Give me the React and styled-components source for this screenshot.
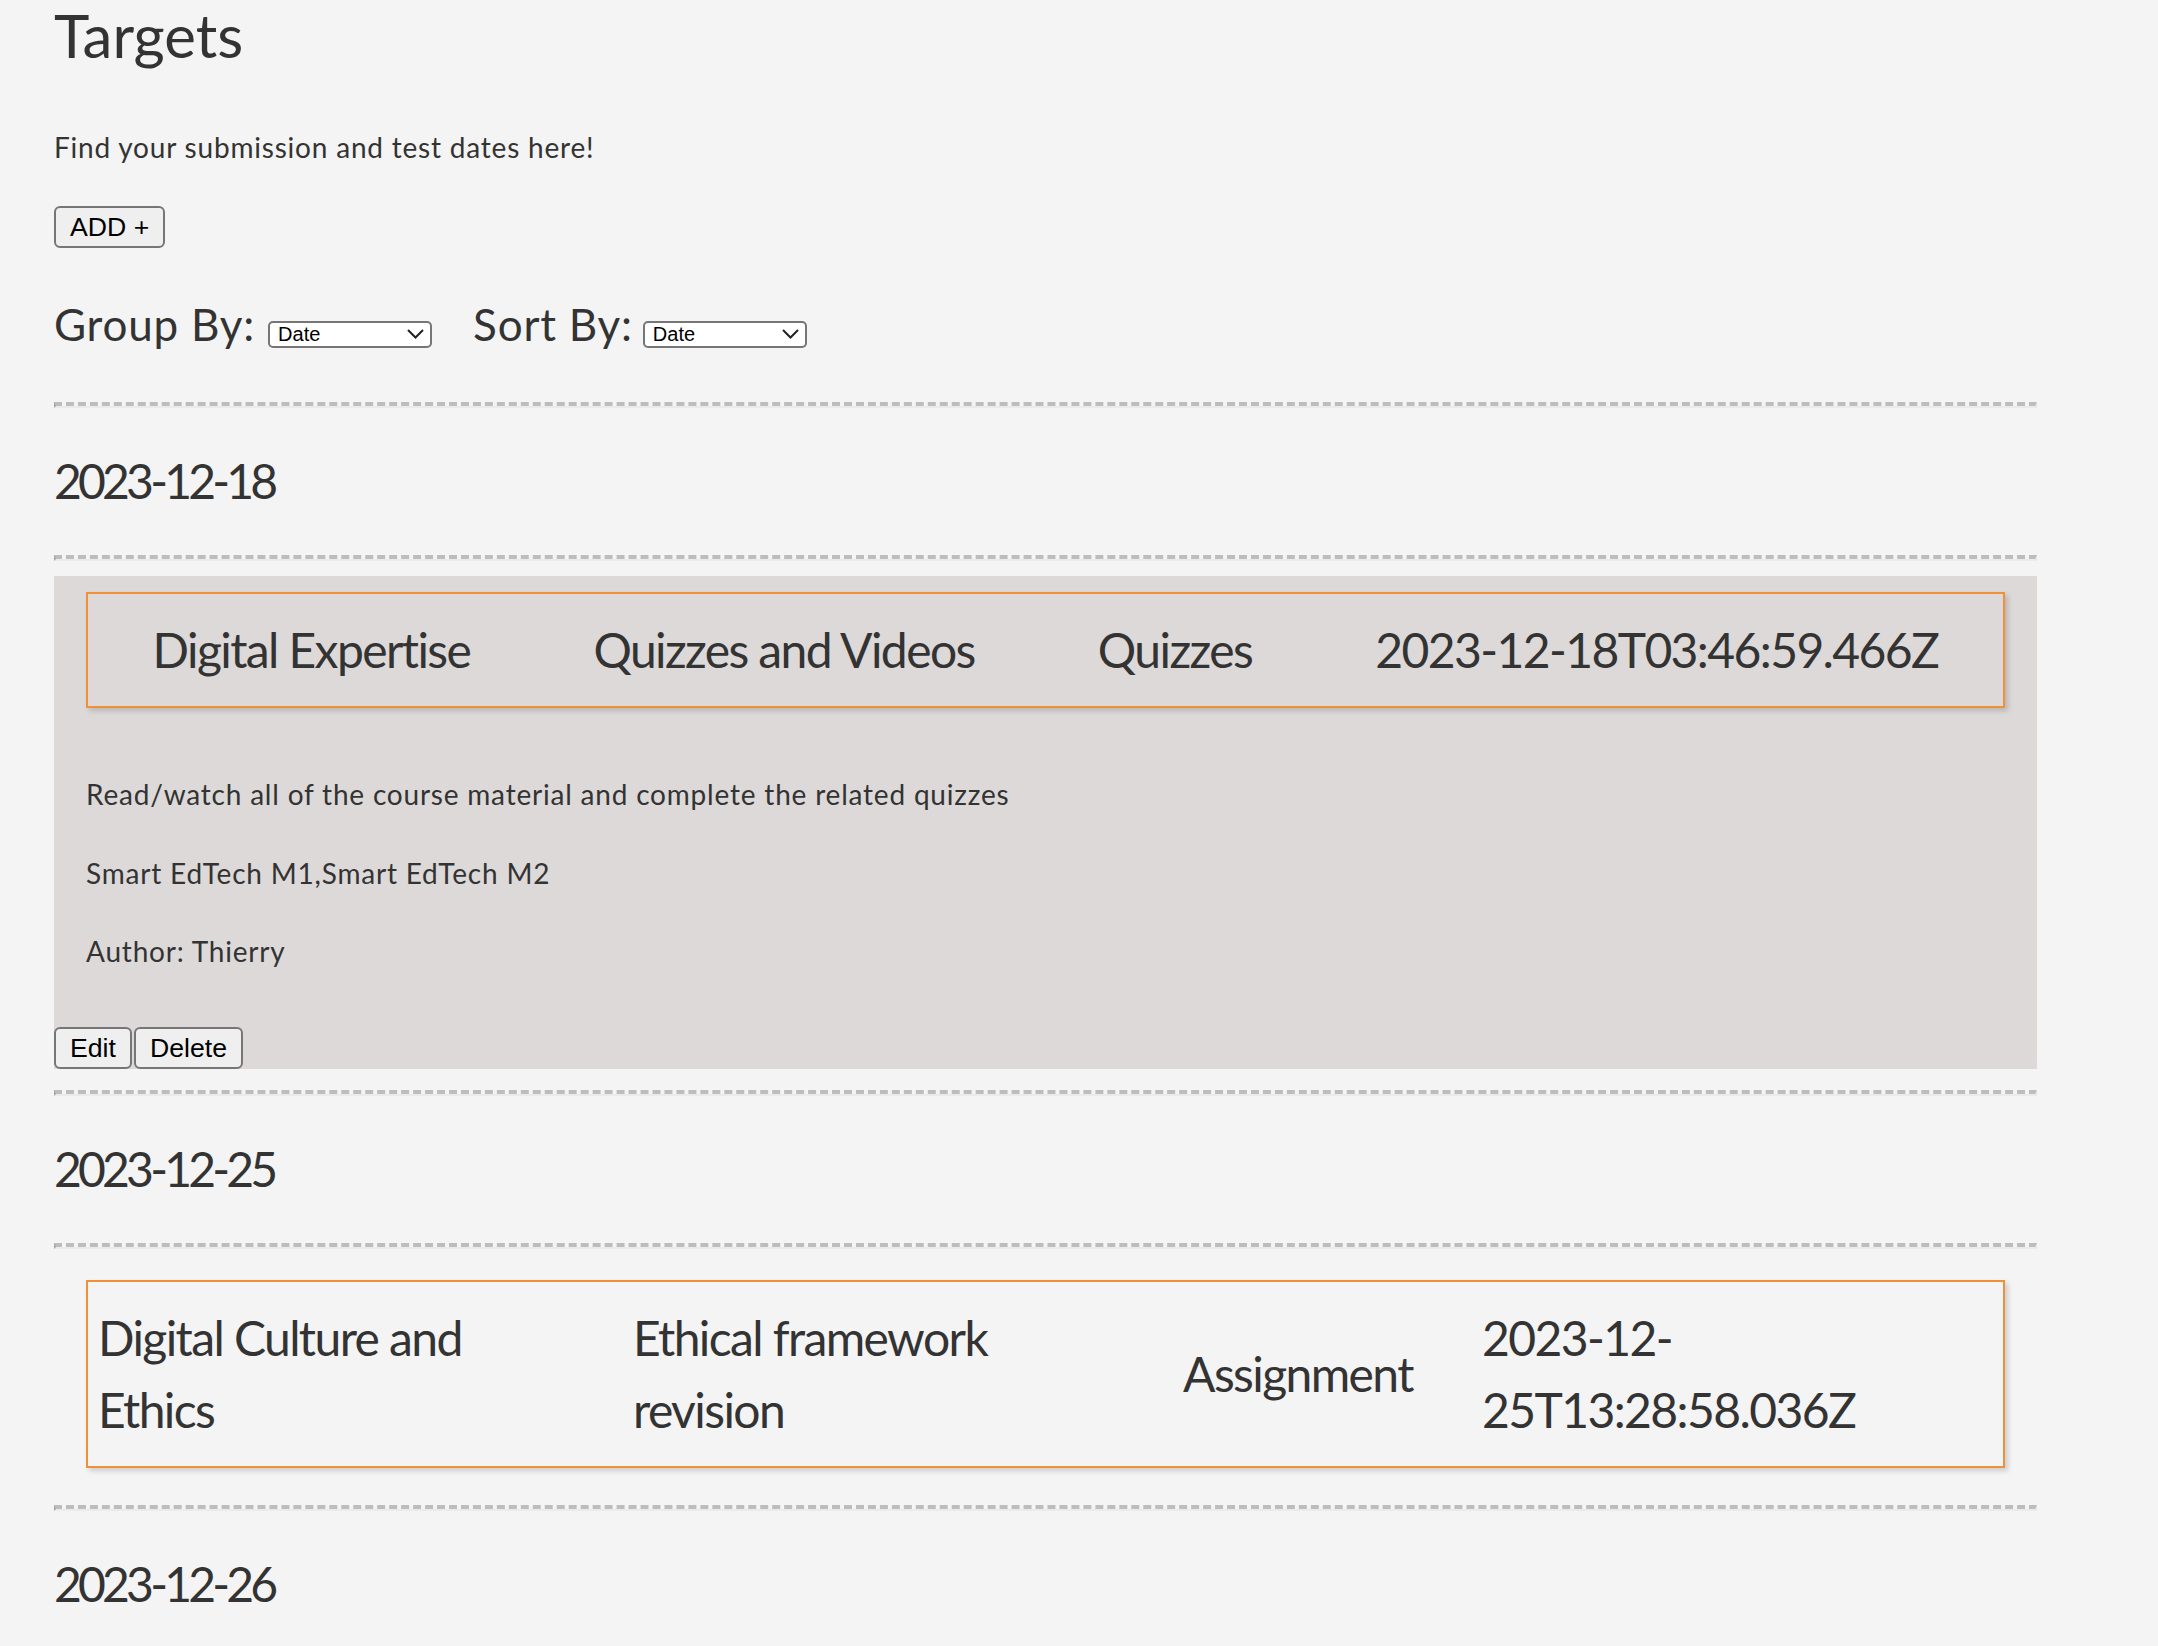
import React, { useState } from "react";
import styled, { createGlobalStyle } from "styled-components";

const GlobalStyle = createGlobalStyle`
  body {
    margin: 0;
    background: #f4f4f4;
    font-family: Lato, "Open Sans", sans-serif;
    color: #333;
  }
`;

const Pagina = styled.div`
  padding: 0 121px 40px 54px;
`;

const Titulo = styled.h1`
  font-size: 60px;
  font-weight: 400;
  line-height: 70px;
  margin: 0;
`;

const Intro = styled.p`
  font-size: 28px;
  line-height: 40px;
  letter-spacing: 0.8px;
  margin: 57px 0 0;
`;

const Boton = styled.button`
  height: 42px;
  padding: 0 14px;
  border: 2px solid #767676;
  border-radius: 6px;
  background: #efefef;
  color: #000;
  font-family: "Liberation Sans", Arial, sans-serif;
  font-size: 26.67px;
  cursor: pointer;
`;

const BotonAgregar = styled(Boton)`
  margin-top: 39px;
  display: block;
`;

const Controles = styled.div`
  display: flex;
  align-items: baseline;
  margin: 48px 0 50px;
`;

const Etiqueta = styled.label`
  font-size: 44px;
  line-height: 56px;
  letter-spacing: 0.8px;
  margin-left: ${(p) => p.$offset || 0}px;
`;

const SelectorCaja = styled.span`
  position: relative;
  display: inline-block;
  margin-left: ${(p) => p.$offset}px;
  svg {
    position: absolute;
    right: 8px;
    top: 8px;
    pointer-events: none;
  }
`;

const Selector = styled.select`
  appearance: none;
  width: 164px;
  height: 27px;
  padding: 0 0 0 8px;
  border: 2px solid #767676;
  border-radius: 5px;
  background: #fff;
  color: #000;
  font-family: "Liberation Sans", Arial, sans-serif;
  font-size: 20px;
`;

const Separador = styled.hr`
  margin: 0;
  height: 0;
  border: none;
  border-top: 4px dashed #bdbdbd;
  border-bottom: 2px solid #ebebeb;
  border-left: 2px solid #a3a3a3;
  border-right: 2px solid #e4e4e4;
`;

const FechaGrupo = styled.h2`
  font-size: 48px;
  font-weight: 400;
  line-height: 67px;
  letter-spacing: -3.8px;
  margin: 39px 0 41px;
`;

const Lista = styled.div`
  padding-top: 15px;
`;

const Tarjeta = styled.div`
  display: flow-root;
  background: ${(p) => (p.$abierta ? "#dcd9d8" : "transparent")};
  margin-bottom: 21px;
`;

const Resumen = styled.div`
  margin: 16px 32px;
  padding: 20px 10px;
  display: flex;
  justify-content: space-around;
  align-items: center;
  gap: 14px;
  border: 2px solid #f0913a;
  box-shadow: 3px 3px 5px rgba(0, 0, 0, 0.16);
  font-size: 48px;
  line-height: 72px;
  letter-spacing: -1.6px;
  cursor: pointer;
`;

const Celda = styled.div`
  box-sizing: border-box;
  flex: ${(p) => (p.$ancho ? `0 0 ${p.$ancho}px` : "0 1 auto")};
  padding-right: ${(p) => p.$holgura || 0}px;
`;

const Detalle = styled.div`
  display: flex;
  flex-direction: column;
  gap: 38.5px;
  padding: 50px 32px 0;
  font-size: 28px;
  line-height: 40px;
  letter-spacing: 0.8px;
  p {
    margin: 0;
  }
`;

const Acciones = styled.div`
  display: flex;
  gap: 2px;
`;

const AccionesTarjeta = styled(Acciones)`
  margin-top: 56px;
`;

const Flecha = () => (
  <svg width="17" height="10" viewBox="0 0 17 10">
    <path d="M1 1 L8.5 8.5 L16 1" fill="none" stroke="#222" strokeWidth="2" />
  </svg>
);

const grupos = [
  {
    fecha: "2023-12-18",
    objetivos: [
      {
        id: 1,
        curso: "Digital Expertise",
        titulo: "Quizzes and Videos",
        tipo: "Quizzes",
        entrega: "2023-12-18T03:46:59.466Z",
        descripcion: "Read/watch all of the course material and complete the related quizzes",
        modulos: ["Smart EdTech M1", "Smart EdTech M2"],
        autor: "Thierry",
      },
    ],
  },
  {
    fecha: "2023-12-25",
    objetivos: [
      {
        id: 2,
        curso: "Digital Culture and Ethics",
        titulo: "Ethical framework revision",
        tipo: "Assignment",
        entrega: "2023-12-25T13:28:58.036Z",
        // columnas estrechas: el texto se parte en dos lineas
        anchos: [521, 536, 285, 511],
        descripcion: "",
        modulos: [],
        autor: "",
      },
    ],
  },
  { fecha: "2023-12-26", objetivos: [] },
];

const Objetivo = ({ obj, abierta, alternar }) => {
  const anchos = obj.anchos || [];
  const holgura = anchos.length ? 60 : 0;
  return (
    <Tarjeta $abierta={abierta}>
      <Resumen onClick={alternar}>
        <Celda $ancho={anchos[0]} $holgura={holgura}>{obj.curso}</Celda>
        <Celda $ancho={anchos[1]} $holgura={holgura}>{obj.titulo}</Celda>
        <Celda $ancho={anchos[2]}>{obj.tipo}</Celda>
        <Celda $ancho={anchos[3]} $holgura={holgura}>{obj.entrega}</Celda>
      </Resumen>
      {abierta && (
        <>
          <Detalle>
            <p>{obj.descripcion}</p>
            <p>{obj.modulos.join(",")}</p>
            <p>Author: {obj.autor}</p>
          </Detalle>
          <AccionesTarjeta>
            <Boton>Edit</Boton>
            <Boton>Delete</Boton>
          </AccionesTarjeta>
        </>
      )}
    </Tarjeta>
  );
};

export default function App() {
  const [abierto, setAbierto] = useState(1);
  const [agrupar, setAgrupar] = useState("date");
  const [ordenar, setOrdenar] = useState("date");

  return (
    <Pagina>
      <GlobalStyle />
      <Titulo>Targets</Titulo>
      <Intro>Find your submission and test dates here!</Intro>
      <BotonAgregar>ADD +</BotonAgregar>

      <Controles>
        <Etiqueta htmlFor="agrupar">Group By:</Etiqueta>
        <SelectorCaja $offset={13}>
          <Selector id="agrupar" value={agrupar} onChange={(e) => setAgrupar(e.target.value)}>
            <option value="date">Date</option>
            <option value="course">Course</option>
          </Selector>
          <Flecha />
        </SelectorCaja>
        <Etiqueta htmlFor="ordenar" $offset={41}>Sort By:</Etiqueta>
        <SelectorCaja $offset={10}>
          <Selector id="ordenar" value={ordenar} onChange={(e) => setOrdenar(e.target.value)}>
            <option value="date">Date</option>
            <option value="course">Course</option>
          </Selector>
          <Flecha />
        </SelectorCaja>
      </Controles>

      {grupos.map((g) => (
        <section key={g.fecha}>
          <Separador />
          <FechaGrupo>{g.fecha}</FechaGrupo>
          <Separador />
          {g.objetivos.length > 0 && (
            <Lista>
              {g.objetivos.map((o) => (
                <Objetivo
                  key={o.id}
                  obj={o}
                  abierta={abierto === o.id}
                  alternar={() => setAbierto(abierto === o.id ? null : o.id)}
                />
              ))}
            </Lista>
          )}
        </section>
      ))}
    </Pagina>
  );
}
